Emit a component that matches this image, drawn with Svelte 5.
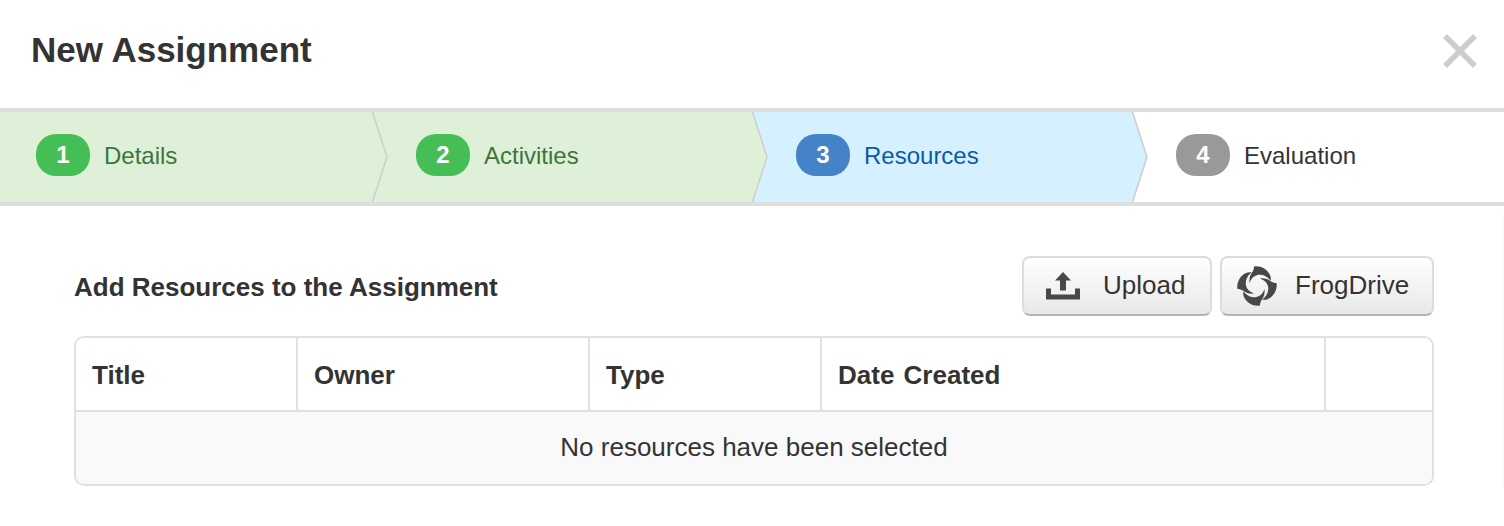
<script>
  const steps = [
    { n: 1, label: 'Details', state: 'done' },
    { n: 2, label: 'Activities', state: 'done' },
    { n: 3, label: 'Resources', state: 'active' },
    { n: 4, label: 'Evaluation', state: 'todo' }
  ];
  const columns = ['Title', 'Owner', 'Type', 'Date Created', ''];
</script>

<div class="modal">
  <header class="head">
    <h1>New Assignment</h1>
    <button class="close" aria-label="Close">
      <svg width="34" height="34" viewBox="0 0 34 34"><path d="M2 2 32 32M32 2 2 32" fill="none" stroke="#cdcdcd" stroke-width="5.600"/></svg>
    </button>
  </header>

  <nav class="steps">
    {#each steps as s, i}
      <div class="step {s.state}">
        <span class="badge">{s.n}</span>
        <span class="label">{s.label}</span>
        {#if i < steps.length - 1}
          <svg class="chev" width="18" height="90" viewBox="-2 0 18 90"><path d="M-2 0H0.500L15 45 0.500 90H-2Z" class="chev-fill"/><path d="M0.500 0 15 45 0.500 90" fill="none" stroke="#cfcfcf" stroke-width="1.600"/></svg>
        {/if}
      </div>
    {/each}
  </nav>

  <section class="body">
    <div class="bar">
      <h2>Add Resources to the Assignment</h2>
      <div class="actions">
        <button class="btn upload">
          <svg width="34" height="28" viewBox="0 0 34 28"><path d="M17 0 25 8.500H20V18.500H14V8.500H9ZM0 16.500H5V22.500H29V16.500H34V27.500H0Z" fill="#484848"/></svg>
          <span>Upload</span>
        </button>
        <button class="btn frog">
          <svg width="40" height="40" viewBox="-20 -20 40 40">
            {#each [0, 90, 180, 270] as a}
              <path d="M-3 -19.500C3 -20.500 10 -17.500 13 -11 14 -9 14 -7 13.500 -5.500 10 -10 5 -12 0.500 -11 -3 -10.300 -6 -7.500 -7.500 -3 -8 -7 -7 -11 -5 -13.500 -3.500 -15.500 -3 -17.500 -3 -19.500Z" fill="#484848" transform="rotate({a})"/>
            {/each}
          </svg>
          <span>FrogDrive</span>
        </button>
      </div>
    </div>

    <div class="table-wrap">
      <table>
        <thead>
          <tr>{#each columns as c}<th>{c}</th>{/each}</tr>
        </thead>
        <tbody>
          <tr><td colspan="5">No resources have been selected</td></tr>
        </tbody>
      </table>
    </div>
  </section>
</div>

<style>
  :global(body) {
    margin: 0;
    background: #fff;
  }
  .modal {
    width: 1504px;
    height: 526px;
    overflow: hidden;
    font-family: "Liberation Sans", Arial, sans-serif;
    color: #333;
    box-sizing: border-box;
  }
  .head {
    height: 108px;
    box-sizing: border-box;
    padding: 0 27px 0 31px;
    display: flex;
    align-items: center;
    justify-content: space-between;
  }
  h1 {
    margin: 0;
    font-size: 35px;
    font-weight: 700;
    line-height: 40px;
    padding-bottom: 8px;
    color: #333;
  }
  .close {
    border: 0;
    background: none;
    padding: 0;
    display: block;
    height: 34px;
    margin-bottom: 6px;
  }
  .close svg { display: block; }
  .steps {
    display: flex;
    height: 90px;
    border-top: 4px solid #dedede;
    border-bottom: 4px solid #dedede;
  }
  .step {
    position: relative;
    width: 380px;
    box-sizing: border-box;
    padding-left: 44px;
    padding-bottom: 4px;
    display: flex;
    align-items: center;
    gap: 14px;
    font-size: 24px;
  }
  .step:first-child {
    width: 372px;
    padding-left: 36px;
  }
  .step:last-child { flex: 1; }
  .label { padding-top: 1px; }
  .badge {
    width: 54px;
    height: 42px;
    border-radius: 20px;
    color: #fff;
    display: flex;
    align-items: center;
    justify-content: center;
    font-size: 24px;
    font-weight: 700;
  }
  .chev {
    position: absolute;
    left: calc(100% - 2px);
    top: 0;
    z-index: 1;
    display: block;
  }
  .done { background: #dff0d8; color: #3c763d; }
  .done .badge { background: #45bf55; }
  .done .chev-fill { fill: #dff0d8; }
  .active { background: #d5f1ff; color: #0a5aa8; }
  .active .badge { background: #4583c9; }
  .active .chev-fill { fill: #d5f1ff; }
  .todo { background: #fff; color: #333; }
  .todo .badge { background: #999; }
  .body {
    margin-top: 7px;
    padding: 43px 69px 0 74px;
    border-right: 1px solid #f9f9f9;
  }
  .bar {
    display: flex;
    align-items: center;
    justify-content: space-between;
    height: 60px;
    margin-bottom: 20px;
  }
  h2 {
    margin: 0;
    padding-top: 2px;
    font-size: 26px;
    font-weight: 700;
    color: #333;
  }
  .actions {
    display: flex;
    gap: 8px;
  }
  .btn {
    height: 60px;
    box-sizing: border-box;
    display: flex;
    align-items: center;
    font: 26px "Liberation Sans", Arial, sans-serif;
    color: #333;
    border: 2px solid #dcdcdc;
    border-bottom-color: #b4b4b4;
    border-radius: 8px;
    background: linear-gradient(#ffffff, #e8e8e8);
    padding: 0;
  }
  .btn span { padding-bottom: 2px; }
  .upload {
    width: 190px;
    padding-left: 22px;
    gap: 23px;
  }
  .upload svg { margin-top: -1px; }
  .frog {
    width: 214px;
    padding-left: 15px;
    gap: 18px;
  }
  .table-wrap {
    border: 2px solid #e0e0e0;
    border-radius: 10px;
    overflow: hidden;
    box-sizing: border-box;
    height: 150px;
  }
  table {
    width: 100%;
    border-collapse: separate;
    border-spacing: 0;
    table-layout: fixed;
  }
  th {
    height: 74px;
    box-sizing: border-box;
    padding: 2px 0 0 16px;
    text-align: left;
    font-size: 26px;
    font-weight: 700;
    word-spacing: 2px;
    color: #333;
    background: #fff;
    border-right: 2px solid #e0e0e0;
    border-bottom: 2px solid #e0e0e0;
  }
  th:nth-child(1) { width: 222px; }
  th:nth-child(2) { width: 292px; }
  th:nth-child(3) { width: 232px; }
  th:nth-child(4) { width: 504px; }
  th:last-child { border-right: 0; }
  td {
    height: 72px;
    box-sizing: border-box;
    padding: 0 0 2px;
    text-align: center;
    font-size: 26px;
    background: #f9f9f9;
    color: #333;
  }
</style>
